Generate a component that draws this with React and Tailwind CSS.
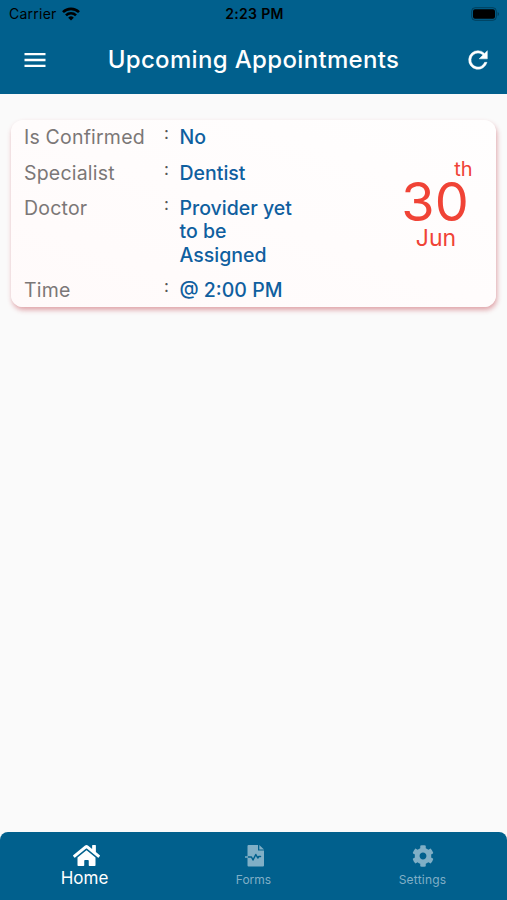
import React from 'react';
import { MdMenu } from 'react-icons/md';
import { FaCog, FaHome } from 'react-icons/fa';

const details = [
  { label: 'Is Confirmed', value: 'No' },
  { label: 'Specialist', value: 'Dentist' },
  { label: 'Doctor', value: 'Provider yet to be Assigned' },
  { label: 'Time', value: '@ 2:00 PM' },
];

const WifiIcon = () => (
  <svg viewBox="0 0 18 14" className="ml-[5px] h-3.5 w-[18px]" fill="none" stroke="currentColor" strokeWidth="2.6">
    <path d="M1 5.2a11.3 11.3 0 0 1 16 0" />
    <path d="M4 8.3a7 7 0 0 1 10 0" />
    <path d="M9 13.6 6.2 10.7a4 4 0 0 1 5.6 0z" fill="currentColor" stroke="none" />
  </svg>
);

const BatteryIcon = () => (
  <svg viewBox="0 0 29 14" className="h-3.5 w-[29px]">
    <rect x="0.7" y="0.7" width="24.6" height="12.6" rx="3.5" fill="none" stroke="black" strokeOpacity="0.35" />
    <rect x="2" y="2.2" width="22" height="9.6" rx="2" fill="black" />
    <path d="M26.7 5c1.6.6 1.6 3.4 0 4z" fill="black" fillOpacity="0.4" />
  </svg>
);

const RefreshIcon = () => (
  <svg viewBox="0 0 24 24" className="size-7" fill="currentColor" stroke="currentColor" strokeWidth="0.4">
    <path d="M17.65 6.35A7.96 7.96 0 0 0 12 4a8 8 0 1 0 7.73 10h-2.080A6 6 0 1 1 12 6c1.660 0 3.140.69 4.220 1.780L13 11h7V4z" />
  </svg>
);

// Document with a folded corner and a pulse line running through it
const FormsIcon = () => (
  <svg viewBox="0 0 20 24" className="ml-0.5 h-6 w-5">
    <path d="M3.500 1H13v5.500h6V21.500a1 1 0 0 1-1 1H3.500a1 1 0 0 1-1-1V2a1 1 0 0 1 1-1z" fill="currentColor" />
    <path d="M14.300 1 19 5.400h-4.700z" fill="currentColor" />
    <path d="M2.500 13h4l1.500 3 2.800-5.500 2 3.500 1-1.500h1.700" fill="none" stroke="#01608d" strokeWidth="1.5" strokeLinejoin="round" strokeLinecap="round" />
    <path d="M0 13h3" stroke="currentColor" strokeWidth="1.5" />
  </svg>
);

const StatusBar = () => (
  <div className="grid h-7 grid-cols-3 items-center pl-[9px] pr-[7px] text-[14px] leading-7 text-black">
    <div className="flex items-center">
      <span className="tracking-[0.25px]">Carrier</span>
      <WifiIcon />
    </div>
    <span className="text-center font-semibold tracking-[0.3px]">2:23 PM</span>
    <div className="flex justify-end">
      <BatteryIcon />
    </div>
  </div>
);

const App = () => {
  return (
    <div className="flex h-[900px] w-[507px] flex-col overflow-hidden bg-[#fafafa] font-['Inter','Liberation_Sans',sans-serif]">
      <header className="h-[94px] shrink-0 bg-[#01608d]">
        <StatusBar />
        <div className="flex h-16 items-center justify-between pl-[21px] pr-[15px] text-white">
          <MdMenu className="size-7" />
          <h1 className="-ml-1.5 text-[24px] font-medium tracking-[0.34px]">Upcoming Appointments</h1>
          <RefreshIcon />
        </div>
      </header>

      <main className="flex-1 px-[11px] pt-[26px]">
        <section className="flex h-[187px] w-[485px] rounded-xl bg-linear-to-tr from-[#fffafa] to-[#fffefe] pl-[13px] pt-[6px] shadow-[1px_3px_5px_rgba(190,60,70,0.45)]">
          <div className="flex flex-col gap-[12.300px]">
            {details.map((item) => (
              <div key={item.label} className="flex text-[19.500px] leading-[23.300px]">
                <span className="w-[140px] tracking-[0.2px] text-[#7b7777]">{item.label}</span>
                <span className="-mt-[3px] w-[15.500px] text-[17px] leading-5 text-[#555]">:</span>
                <span className="w-[130px] font-medium text-[#0f5f9f]">{item.value}</span>
              </div>
            ))}
          </div>
          <div className="ml-[92px] flex w-[71px] flex-col pt-[31px] text-[#f04336]">
            <span className="self-end text-[20px] leading-6">th</span>
            <span className="-ml-1 text-center text-[54px] leading-[42px]">30</span>
            <span className="-ml-0.5 text-center text-[23px] leading-[30px]">Jun</span>
          </div>
        </section>
      </main>

      <nav className="grid h-[68px] shrink-0 grid-cols-3 rounded-t-lg bg-[#01608d] text-[#80afc6]">
        <div className="flex flex-col items-center pt-[10px] text-white">
          <FaHome className="ml-1 size-[27px]" />
          <span className="-mt-[3px] text-[17px] leading-6">Home</span>
        </div>
        <div className="flex flex-col items-center pt-3">
          <FormsIcon />
          <span className="text-[12px] leading-6">Forms</span>
        </div>
        <div className="flex flex-col items-center pt-[13px]">
          <FaCog className="size-[22px]" />
          <span className="mt-px text-[12px] leading-6 tracking-[0.2px]">Settings</span>
        </div>
      </nav>
    </div>
  );
};

export default App;
